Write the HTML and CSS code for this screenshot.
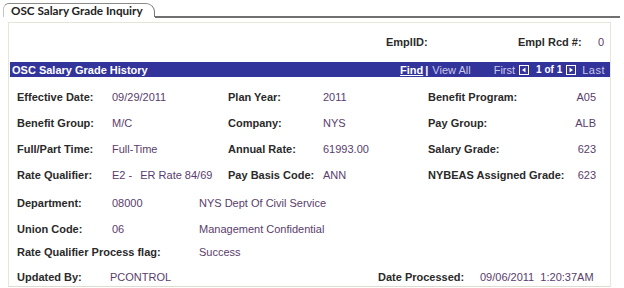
FILE: index.html
```html
<!DOCTYPE html>
<html>
<head>
<meta charset="utf-8">
<link rel="stylesheet" href="styles.css">
</head>
<body>
<div class="tabbar">
  <div class="tab">OSC Salary Grade Inquiry</div>
  <div class="tabfill"></div>
</div>
<div class="box">
  <div class="idrow">
    <span class="lbl id-lbl">EmplID:</span>
    <span class="lbl rcd-lbl">Empl Rcd #:</span>
    <span class="val rcd-val">0</span>
  </div>
  <div class="bar">
    <span class="bar-title">OSC Salary Grade History</span>
    <div class="nav">
      <span class="find">Find</span>
      <span class="sep">|</span>
      <span class="viewall">View All</span>
      <span class="first">First</span>
      <svg class="navicon" width="10" height="10" viewBox="0 0 10 10"><rect x="0.5" y="0.5" width="9" height="9" fill="none" stroke="#fff"/><path d="M6.5 2.5 L3 5 L6.5 7.5 Z" fill="#fff"/></svg>
      <span class="count">1 of 1</span>
      <svg class="navicon" width="10" height="10" viewBox="0 0 10 10"><rect x="0.5" y="0.5" width="9" height="9" fill="none" stroke="#fff"/><path d="M3.5 2.5 L7 5 L3.5 7.5 Z" fill="#fff"/></svg>
      <span class="last">Last</span>
    </div>
  </div>
  <div class="grid">
    <span class="lbl">Effective Date:</span><span class="val">09/29/2011</span>
    <span class="lbl">Plan Year:</span><span class="val">2011</span>
    <span class="lbl">Benefit Program:</span><span class="val r">A05</span>

    <span class="lbl">Benefit Group:</span><span class="val">M/C</span>
    <span class="lbl">Company:</span><span class="val">NYS</span>
    <span class="lbl">Pay Group:</span><span class="val r">ALB</span>

    <span class="lbl">Full/Part Time:</span><span class="val">Full-Time</span>
    <span class="lbl">Annual Rate:</span><span class="val">61993.00</span>
    <span class="lbl">Salary Grade:</span><span class="val r">623</span>

    <span class="lbl">Rate Qualifier:</span><span class="val">E2 - <span class="gap">ER Rate 84/69</span></span>
    <span class="lbl">Pay Basis Code:</span><span class="val">ANN</span>
    <span class="lbl">NYBEAS Assigned Grade:</span><span class="val r">623</span>
  </div>
  <div class="grid2">
    <span class="lbl">Department:</span><span class="val">08000</span><span class="val">NYS Dept Of Civil Service</span>
    <span class="lbl">Union Code:</span><span class="val">06</span><span class="val">Management Confidential</span>
    <span class="lbl span2">Rate Qualifier Process flag:</span><span class="val">Success</span>
  </div>
  <div class="footrow">
    <span class="lbl upd-lbl">Updated By:</span>
    <span class="val upd-val">PCONTROL</span>
    <span class="lbl dp-lbl">Date Processed:</span>
    <span class="val">09/06/2011&nbsp; 1:20:37AM</span>
  </div>
</div>
</body>
</html>
```
FILE: styles.css
```css
html, body {
  margin: 0;
  padding: 0;
  background: #fff;
}
body {
  width: 624px;
  height: 288px;
  overflow: hidden;
  font-family: "Liberation Sans", Arial, sans-serif;
  font-size: 11px;
  color: #333;
}
.tabbar {
  display: flex;
  align-items: flex-end;
  height: 17px;
  padding: 2px 4px 0 3px;
  box-sizing: border-box;
}
.tab {
  height: 14px;
  box-sizing: border-box;
  padding: 0 11px 0 7px;
  border-top: 1px solid #8a8a8a;
  border-left: 1px solid #c4c4c4;
  border-right: 1px solid #777;
  border-top-left-radius: 6px;
  border-top-right-radius: 9px;
  font-family: Lato, "Open Sans", sans-serif;
  font-size: 11.7px;
  font-weight: 700;
  line-height: 12px;
  color: #222;
}
.tabfill {
  flex: 1;
  border-bottom: 2px solid #707070;
  margin-bottom: -1px;
}
.box {
  margin: 5px 13px 0 8px;
  height: 265px;
  box-sizing: border-box;
  border: 1px solid #e6e6d8;
  border-bottom-color: #dcdcd0;
}
.lbl {
  font-weight: bold;
  color: #2a2a2a;
  white-space: nowrap;
}
.val {
  color: #5a3d6c;
  white-space: nowrap;
}
.idrow {
  display: flex;
  height: 14px;
  line-height: 14px;
  margin-top: 12px;
  padding-left: 377px;
}
.id-lbl { width: 132px; }
.rcd-lbl { width: 80px; }
.bar {
  display: flex;
  justify-content: space-between;
  align-items: center;
  height: 15px;
  margin: 13px 0 0 1px;
  background: #33339c;
  color: #fff;
  padding: 0 5px 0 2px;
}
.bar-title {
  font-weight: bold;
  color: #fff;
}
.nav {
  display: flex;
  align-items: center;
  color: #c8c8e6;
}
.find {
  color: #fff;
  text-decoration: underline;
  font-weight: bold;
}
.sep {
  color: #fff;
  font-weight: bold;
  margin: 0 4px 0 2px;
}
.viewall { margin-right: 23px; }
.first { margin-right: 4px; }
.navicon { display: block; }
.count {
  color: #fff;
  font-weight: bold;
  font-size: 10px;
  margin: 0 4px 0 7px;
}
.last {
  margin-left: 6px;
  letter-spacing: 0.5px;
}
.grid {
  display: grid;
  grid-template-columns: 95px 116px 95px 105px 1fr auto;
  grid-auto-rows: 26px;
  align-items: center;
  padding: 7px 14px 0 8px;
}
.r { text-align: right; }
.gap { margin-left: 5px; }
.grid2 {
  display: grid;
  grid-template-columns: 95px 87px 1fr;
  grid-template-rows: 27px 26px 20px;
  align-items: center;
  padding: 1px 14px 0 8px;
}
.span2 { grid-column: 1 / span 2; }
.footrow {
  display: flex;
  align-items: center;
  height: 14px;
  line-height: 14px;
  padding: 8px 0 0 8px;
}
.upd-lbl { width: 93px; }
.upd-val { width: 268px; }
.dp-lbl { width: 102px; }
```
